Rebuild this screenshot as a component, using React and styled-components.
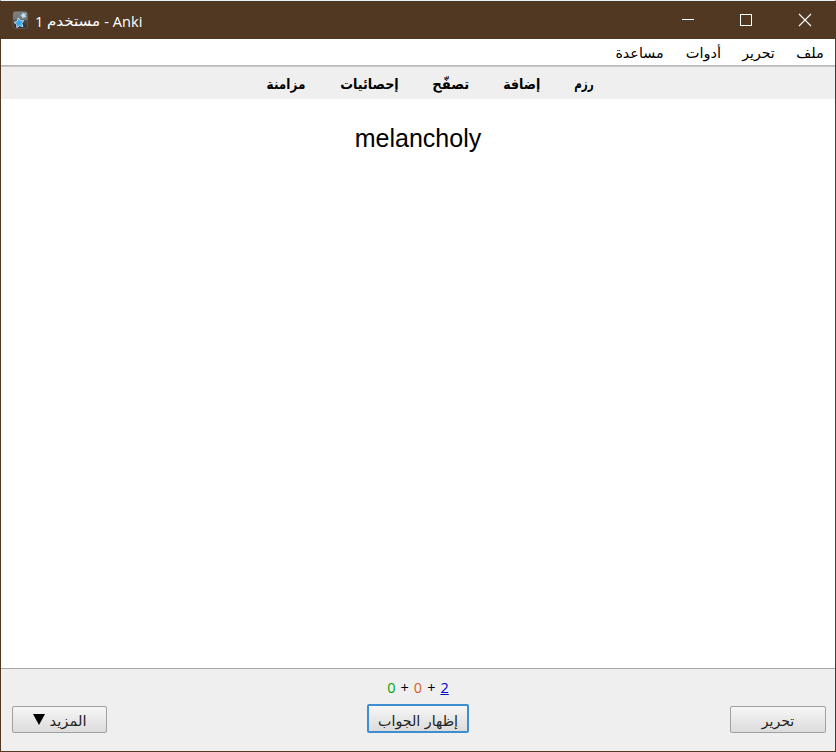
import React from 'react';
import styled, { createGlobalStyle } from 'styled-components';

const GlobalStyle = createGlobalStyle`
  * { box-sizing: border-box; }
  body { margin: 0; overflow: hidden; }
`;

const Window = styled.div`
  width: 836px;
  height: 752px;
  display: flex;
  flex-direction: column;
  background: #fff;
  border: 1px solid #503823;
  border-top-color: #e9f1f5;
  font-family: "Noto Sans", "DejaVu Sans", sans-serif;
  color: #000;
`;

const TitleBar = styled.header`
  height: 38px;
  flex: none;
  display: flex;
  align-items: center;
  background: #503823;
  margin: 0 -1px;
  padding-left: 12px;
  color: #fff;
`;

const Title = styled.div`
  margin-left: 7px;
  padding-top: 1px;
  flex: 1;
  font-family: "Open Sans", "DejaVu Sans", sans-serif;
  font-size: 14.6px;
  line-height: 20px;
  white-space: nowrap;
  display: flex;
  gap: 4px;
`;

const Caption = styled.div`
  display: flex;
  svg { display: block; }
`;

const MenuBar = styled.nav`
  height: 28px;
  flex: none;
  display: flex;
  direction: rtl;
  align-items: center;
  gap: 21px;
  padding-right: 11px;
  background: #fff;
  border-bottom: 1px solid #c9c9c9;
  box-shadow: inset 0 -1px #b9b9b9;
`;

const Toolbar = styled.nav`
  height: 32px;
  flex: none;
  display: flex;
  direction: rtl;
  align-items: center;
  gap: 34.5px;
  padding: 2px 242px 0 0;
  background: #efefef;
`;

const Word = styled.span`
  display: flex;
  justify-content: center;
  flex: none;
  direction: rtl;
  width: ${(p) => p.$w}px;
  font-family: "DejaVu Sans", sans-serif;
  font-size: 14px;
  font-weight: ${(p) => (p.$bold ? 700 : 400)};
  line-height: 20px;
  white-space: nowrap;
  transform: scaleX(${(p) => p.$scale || 1});
`;

const Card = styled.main`
  flex: 1;
  padding-top: 24px;
  text-align: center;
  font: 25px/30px "Liberation Sans", Arial, sans-serif;
`;

const Footer = styled.footer`
  height: 83px;
  flex: none;
  background: #efefef;
  border-top: 1px solid #a5a5a5;
  padding: 9px 9px 0 11px;
`;

const Counts = styled.div`
  height: 20px;
  display: flex;
  justify-content: center;
  gap: 5px;
  padding-right: 2px;
  font: 14.5px/20px "Open Sans", sans-serif;
`;

const Count = styled.span`
  color: ${(p) => p.$color};
  text-decoration: ${(p) => (p.$active ? 'underline' : 'none')};
`;

const Actions = styled.div`
  display: grid;
  grid-template-columns: 95px 102px 96px;
  justify-content: space-between;
  align-items: start;
  margin-top: 6px;
`;

const Button = styled.button`
  display: flex;
  align-items: center;
  justify-content: center;
  gap: 5px;
  height: ${(p) => (p.$focus ? 29 : 27)}px;
  margin: ${(p) => (p.$focus ? '0 1px 0 -1px' : '2px 0 0')};
  padding: ${(p) => (p.$focus ? 5 : 2)}px 0 0;
  border: ${(p) => (p.$focus ? '2px solid #3d8fd1' : '1px solid #a0a0a0')};
  border-radius: 2px;
  background: linear-gradient(#f6f6f6, #dcdcdc);
  color: #222;
  svg { margin-top: -2px; }
`;

const menu = [
  { text: 'ملف', width: 28, scale: 1.04 },
  { text: 'تحرير', width: 33 },
  { text: 'أدوات', width: 35, scale: 1.04 },
  { text: 'مساعدة', width: 51, scale: 1.02 },
];

const links = [
  { text: 'رزم', width: 18, scale: 0.74 },
  { text: 'إضافة', width: 37.5, scale: 0.9 },
  { text: 'تصفّح', width: 35.5, scale: 0.94 },
  { text: 'إحصائيات', width: 59, scale: 0.91 },
  { text: 'مزامنة', width: 38, scale: 0.86 },
];

function AppIcon() {
  return (
    <svg width="16" height="18" viewBox="0 0 16 18">
      <defs>
        <linearGradient id="tile" x1="0" y1="0" x2="0" y2="1">
          <stop offset="0" stopColor="#808080" />
          <stop offset=".45" stopColor="#777" />
          <stop offset=".55" stopColor="#454545" />
          <stop offset="1" stopColor="#303030" />
        </linearGradient>
      </defs>
      <rect x="1" y="0.5" width="14.5" height="17" rx="2.5" fill="url(#tile)" stroke="#6c6860" strokeWidth=".6" />
      <path d="M10.7 1.8l1.2 1.3 1.8-.3-.7 1.7.8 1.6-1.8-.2-1.3 1.2-.4-1.7-1.6-.8 1.5-.9z" fill="#c3e5fa" stroke="#a7cde5" strokeWidth=".8" />
      <path d="M6.4 6.9l1.9 2.8 3.4-.1-1.9 2.7 1.1 3.4-3.3-1-2.8 2-.1-3.4-2.7-2 3.3-1.1z" fill="#36a4ed" stroke="#d5edfb" strokeWidth=".8" />
    </svg>
  );
}

export default function App() {
  return (
    <>
      <GlobalStyle />
      <Window>
        <TitleBar>
          <AppIcon />
          <Title>
            <span>1</span>
            <Word $w={53} $scale={1.08}>مستخدم</Word>
            <span>- Anki</span>
          </Title>
          <Caption>
            <svg width="177" height="38" viewBox="0 0 177 38" fill="none" stroke="#fff">
              <path d="M23 18.5h12" />
              <rect x="81.5" y="13.5" width="11" height="11" />
              <path d="M140 13l12 12M152 13l-12 12" strokeWidth="1.1" />
            </svg>
          </Caption>
        </TitleBar>
        <MenuBar>
          {menu.map((m) => <Word key={m.text} $w={m.width} $scale={m.scale}>{m.text}</Word>)}
        </MenuBar>
        <Toolbar>
          {links.map((l) => <Word key={l.text} $w={l.width} $scale={l.scale} $bold>{l.text}</Word>)}
        </Toolbar>
        <Card>melancholy</Card>
        <Footer>
          <Counts>
            <Count $color="#00aa00">0</Count>
            <span>+</span>
            <Count $color="#d06030">0</Count>
            <span>+</span>
            <Count $color="#0000cc" $active>2</Count>
          </Counts>
          <Actions>
            <Button>
              <svg width="12" height="11" viewBox="0 0 12 11"><path d="M0 0h12L6 11z" fill="#000" /></svg>
              <Word $w={36} $scale={1.05}>المزيد</Word>
            </Button>
            <Button $focus><Word $w={80} $scale={1.02}>إظهار الجواب</Word></Button>
            <Button><Word $w={33}>تحرير</Word></Button>
          </Actions>
        </Footer>
      </Window>
    </>
  );
}
